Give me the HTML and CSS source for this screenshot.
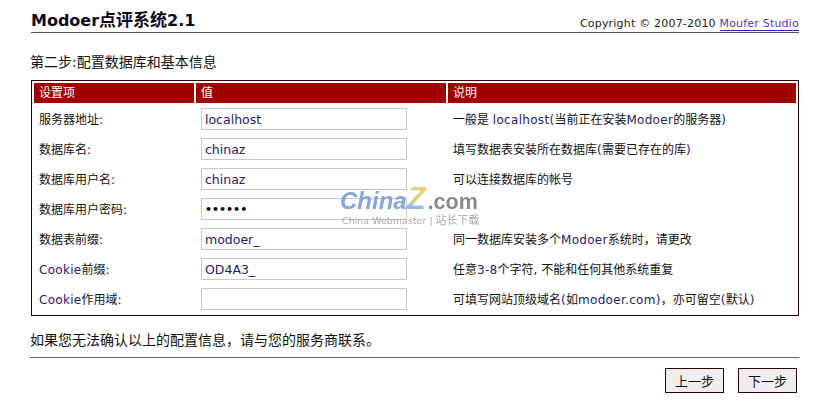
FILE: index.html
```html
<!DOCTYPE html>
<html lang="zh-CN">
<head>
<meta charset="utf-8">
<title>Modoer点评系统2.1</title>
<link rel="stylesheet" href="styles.css">
</head>
<body>
<div class="page">
  <header class="head">
    <h1 class="title">Modoer<span class="title-cjk">点评系统</span>2.1</h1>
    <p class="copy">Copyright © 2007-2010 <a class="copy-link" href="#">Moufer Studio</a></p>
  </header>
  <p class="step">第二步:配置数据库和基本信息</p>
  <table class="config">
    <colgroup><col class="c1"><col class="c2"><col class="c3"></colgroup>
    <thead><tr><th>设置项</th><th>值</th><th>说明</th></tr></thead>
    <tbody>
      <tr><td>服务器地址:</td><td class="val"><input class="field" type="text" value="localhost"></td><td>一般是 <span class="lat">localhost(</span>当前正在安装<span class="lat">Modoer</span>的服务器<span class="lat">)</span></td></tr>
      <tr><td>数据库名:</td><td class="val"><input class="field" type="text" value="chinaz"></td><td>填写数据表安装所在数据库<span class="lat">(</span>需要已存在的库<span class="lat">)</span></td></tr>
      <tr><td>数据库用户名:</td><td class="val"><input class="field" type="text" value="chinaz"></td><td>可以连接数据库的帐号</td></tr>
      <tr><td>数据库用户密码:</td><td class="val"><input class="field field-pass" type="password" value="chinaz"></td><td></td></tr>
      <tr><td>数据表前缀:</td><td class="val"><input class="field" type="text" value="modoer_"></td><td>同一数据库安装多个<span class="lat">Modoer</span>系统时，请更改</td></tr>
      <tr><td><span class="lat">Cookie</span>前缀:</td><td class="val"><input class="field" type="text" value="OD4A3_"></td><td>任意<span class="lat">3-8</span>个字符, 不能和任何其他系统重复</td></tr>
      <tr><td><span class="lat">Cookie</span>作用域:</td><td class="val"><input class="field" type="text" value=""></td><td>可填写网站顶级域名<span class="lat">(</span>如<span class="lat">modoer.com)</span>，亦可留空<span class="lat">(</span>默认<span class="lat">)</span></td></tr>
    </tbody>
  </table>
  <p class="note">如果您无法确认以上的配置信息，请与您的服务商联系。</p>
  <div class="actions">
    <button class="btn" type="button">上一步</button>
    <button class="btn" type="button">下一步</button>
  </div>
</div>
<div class="mark">
  <div class="mark-logo"><span class="mark-china">China</span><span class="mark-z">Z</span><span class="mark-com">.com</span></div>
  <div class="mark-sub">China Webmaster | <span class="mark-cjk">站长下载</span></div>
</div>
</body>
</html>
```
FILE: styles.css
```css
* { box-sizing: border-box; }
html, body { margin: 0; padding: 0; background: #fff; }
body {
  width: 826px;
  height: 410px;
  overflow: hidden;
  position: relative;
  color: #111;
  font-family: "DejaVu Sans", "Noto Sans CJK SC", sans-serif;
  font-size: 12px;
}
.page { width: 768px; margin-left: 31px; }
.head {
  display: flex;
  justify-content: space-between;
  align-items: flex-end;
  height: 33px;
  border-bottom: 1px solid #555;
}
.title {
  margin: 0 0 -1px;
  font-size: 16px;
  line-height: 24px;
  font-weight: bold;
  color: #0a0a1e;
  white-space: nowrap;
}
.title-cjk { font-size: 17px; }
.copy { margin: 0 0 1px; font-size: 11px; line-height: 13px; letter-spacing: .2px; color: #222; white-space: nowrap; }
.copy-link { color: #5a3aa8; text-decoration: none; border-bottom: 1px solid #4a1a9a; display: inline-block; }
.step { margin: 0 0 0 -1px; height: 47px; padding-top: 19px; font-size: 14px; line-height: 20px; color: #111; }
.config {
  width: 768px;
  height: 236px;
  table-layout: fixed;
  border-collapse: separate;
  border-spacing: 2px;
  border: 1px solid #300;
}
.c1 { width: 160px; }
.c2 { width: 250px; }
.c3 { width: 348px; }
.config th {
  height: 20px;
  padding: 1px 0 0 5px;
  background: #a10000;
  color: #fff;
  font-weight: normal;
  text-align: left;
  font-size: 12px;
  line-height: 19px;
}
.config td { height: 28px; padding: 2px 0 0 5px; font-size: 12px; line-height: 16px; white-space: nowrap; }
.config td.val { padding-top: 0; }
.lat { color: #2a1a6a; letter-spacing: .3px; }
.field {
  display: block;
  width: 206px;
  height: 22px;
  padding: 0 3px;
  border: 1px solid #c8c8c8;
  background: #fff;
  color: #2a1a6a;
  font-family: "DejaVu Sans", sans-serif;
  font-size: 12.5px;
}
.field-pass { color: #000; font-size: 11px; font-weight: bold; }
.note { margin: 0 0 0 -1px; height: 42px; padding: 14px 0 0; border-bottom: 1px solid #666; font-size: 14px; line-height: 20px; color: #111; }
.actions { display: flex; justify-content: flex-end; gap: 14px; padding: 10px 2px 0 0; }
.btn {
  width: 59px;
  height: 25px;
  padding: 0;
  border: 1px solid #300;
  background: #eee;
  color: #111;
  font-family: "Noto Sans CJK SC", sans-serif;
  font-size: 13px;
}
.mark {
  position: absolute;
  left: 340px;
  top: 185px;
  width: 142px;
  opacity: .85;
  pointer-events: none;
}
.mark-logo { display: flex; align-items: baseline; font-family: "Liberation Sans", sans-serif; font-weight: bold; font-style: italic; font-size: 24px; line-height: 28px; }
.mark-china { color: #6d9ad8; }
.mark-z {
  padding-right: 2px;
  font-size: 31px;
  line-height: 28px;
  background: linear-gradient(160deg, #e6c768 50%, #7fb0e4 62%);
  -webkit-background-clip: text;
  background-clip: text;
  color: transparent;
}
.mark-com { color: #6f7680; font-style: normal; font-size: 21.5px; }
.mark-sub { margin: -1px 0 0 2px; font-size: 9.5px; line-height: 12px; color: #9a9a9a; white-space: nowrap; }
.mark-cjk { font-size: 11px; }
```
